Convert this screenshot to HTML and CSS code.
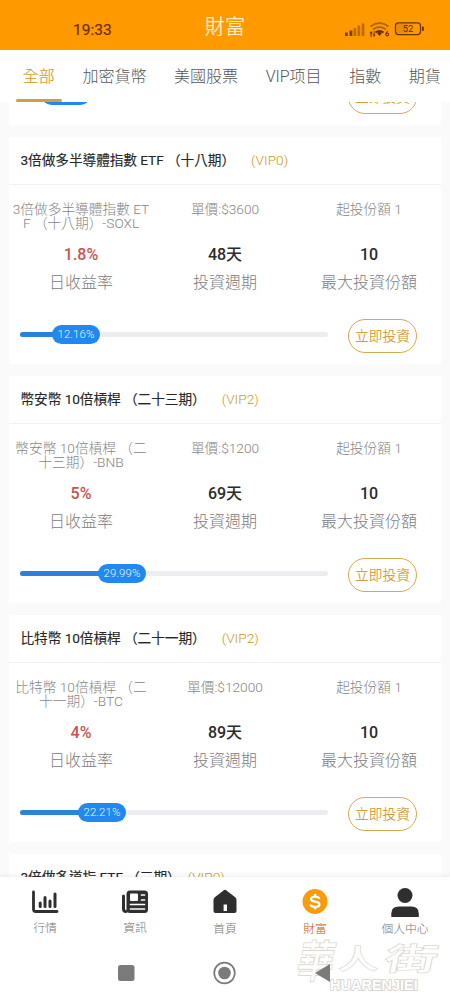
FILE: index.html
```html
<!DOCTYPE html>
<html lang="zh-Hant">
<head>
<meta charset="utf-8">
<meta name="viewport" content="width=device-width, initial-scale=1">
<title>財富</title>
<link rel="stylesheet" href="styles.css">
</head>
<body>
<div class="phone">
  <header class="header">
    <span class="clock">19:33</span>
    <h1 class="title">財富</h1>
    <svg class="status" width="84" height="18" viewBox="0 0 84 18">
      <g fill="#7a3d00">
        <path d="M1 12.500h2.800v3.500H1z"/><path d="M5.500 10.500h2.800V16H5.500z"/>
        <path opacity=".5" d="M9.500 8h2.700v8H9.500zM13.500 5.500h2.700V16h-2.700zM17.700 3.500h2.700V16h-2.700z"/>
      </g>
      <g fill="none" stroke="#8a4b00" stroke-width="1.900">
        <path opacity=".65" d="M26.500 6.500q9-7 18 0M29 9.500q6.500-5 13 0"/>
        <path stroke="#5e2a00" d="M31.500 12.500q4-3 8 0"/>
      </g>
      <path fill="#5e2a00" d="M33 13q2.500-1.800 5 0l-2.500 3zM27 11l1.800 2.500h-1.200V17h-1v-3.500h-1zM30.500 11v3.500h1L30 17l-1.200-2.500h.9V11z"/>
      <circle cx="43.200" cy="14.500" r="1.400" fill="none" stroke="#6b3300" stroke-width="1.100"/><path d="M42 14q0-2.500 2-3" fill="none" stroke="#6b3300"/>
      <rect x="51.500" y="2.800" width="25" height="11.800" rx="3" fill="none" stroke="#6b3300" stroke-width="1.300"/>
      <path d="M53 4h11v9.500H53z" fill="#c86c00" opacity=".35"/>
      <rect x="78" y="6.500" width="1.800" height="4.500" rx=".8" fill="#6b3300"/>
      <text x="64" y="12.200" class="battery-text">52</text>
    </svg>
  </header>

  <nav class="tabs">
    <a class="tab active">全部</a><a class="tab">加密貨幣</a><a class="tab">美國股票</a><a class="tab">VIP项目</a><a class="tab">指數</a><a class="tab">期貨</a>
  </nav>

  <main class="list">
    <article class="card">
      <div class="card-head"></div>
      <div class="cols"></div>
      <div class="foot">
        <div class="track"><div class="bar" style="width:15%"></div><span class="pill" style="left:22px"></span></div>
        <button class="buy">立即投資</button>
      </div>
    </article>

    <article class="card">
      <div class="card-head"><h2>3倍做多半導體指數 ETF （十八期）</h2><span class="vip">(VIP0)</span></div>
      <div class="cols">
        <div class="col"><p class="sub">3倍做多半導體指數 ET<br>F （十八期）-SOXL</p><p class="value rate">1.8%</p><p class="label">日收益率</p></div>
        <div class="col"><p class="sub">單價:$3600</p><p class="value">48天</p><p class="label">投資週期</p></div>
        <div class="col"><p class="sub">起投份額 1</p><p class="value">10</p><p class="label">最大投資份額</p></div>
      </div>
      <div class="foot">
        <div class="track"><div class="bar" style="width:12.16%"></div><span class="pill" style="left:32px">12.16%</span></div>
        <button class="buy">立即投資</button>
      </div>
    </article>

    <article class="card">
      <div class="card-head"><h2>幣安幣 10倍槓桿 （二十三期）</h2><span class="vip">(VIP2)</span></div>
      <div class="cols">
        <div class="col"><p class="sub">幣安幣 10倍槓桿 （二<br>十三期）-BNB</p><p class="value rate">5%</p><p class="label">日收益率</p></div>
        <div class="col"><p class="sub">單價:$1200</p><p class="value">69天</p><p class="label">投資週期</p></div>
        <div class="col"><p class="sub">起投份額 1</p><p class="value">10</p><p class="label">最大投資份額</p></div>
      </div>
      <div class="foot">
        <div class="track"><div class="bar" style="width:29.99%"></div><span class="pill" style="left:78px">29.99%</span></div>
        <button class="buy">立即投資</button>
      </div>
    </article>

    <article class="card">
      <div class="card-head"><h2>比特幣 10倍槓桿 （二十一期）</h2><span class="vip">(VIP2)</span></div>
      <div class="cols">
        <div class="col"><p class="sub">比特幣 10倍槓桿 （二<br>十一期）-BTC</p><p class="value rate">4%</p><p class="label">日收益率</p></div>
        <div class="col"><p class="sub">單價:$12000</p><p class="value">89天</p><p class="label">投資週期</p></div>
        <div class="col"><p class="sub">起投份額 1</p><p class="value">10</p><p class="label">最大投資份額</p></div>
      </div>
      <div class="foot">
        <div class="track"><div class="bar" style="width:22.21%"></div><span class="pill" style="left:58px">22.21%</span></div>
        <button class="buy">立即投資</button>
      </div>
    </article>

    <article class="card">
      <div class="card-head tight"><h2>3倍做多道指 ETF （三期）</h2><span class="vip">(VIP0)</span></div>
    </article>
  </main>

  <footer class="bottom">
    <nav class="nav">
      <a class="item">
        <svg width="28" height="30" viewBox="0 0 28 30" fill="none" stroke="#2f2f2f" stroke-linecap="round">
          <path stroke-width="2.800" stroke-linejoin="round" d="M2.500 5v17.200q0 2.300 2.300 2.300H26"/>
          <path stroke-width="3" d="M9.200 16v3.500M14 10.500v9M19 14v5.500M24 7v12.500"/>
        </svg><span>行情</span>
      </a>
      <a class="item">
        <svg width="28" height="30" viewBox="0 0 28 30">
          <path fill="none" stroke="#2f2f2f" stroke-width="3" stroke-linecap="round" d="M2.500 9v13q0 2.500 2.500 2.500"/>
          <rect x="5.500" y="3.500" width="21.500" height="22.500" rx="3.500" fill="#2f2f2f"/>
          <rect x="9" y="6.500" width="8" height="7.500" rx="1" fill="#fff"/>
          <path stroke="#fff" stroke-width="1.700" stroke-linecap="round" d="M20.500 8h3M20.500 13h3M9.500 17.500h14M9.500 22h14"/>
        </svg><span>資訊</span>
      </a>
      <a class="item low">
        <svg width="28" height="30" viewBox="0 0 28 30"><path fill="#2f2f2f" d="M12.500 3.500Q14 2.200 15.500 3.500L24.500 10.500Q25.500 11.500 25.500 13V24q0 2-2 2H4.500q-2 0-2-2V13q0-1.500 1-2.500z"/><path fill="#fff" d="M12.600 17.500h3.400V24h-3.400z"/></svg><span>首頁</span>
      </a>
      <a class="item low active">
        <svg width="28" height="30" viewBox="0 0 28 30"><circle cx="14" cy="14.500" r="12.500" fill="#f89c0c"/><path fill="none" stroke="#fff" stroke-width="2.300" d="M18.300 11.800q-.5-2.200-4.300-2.200-4 0-4 2.500 0 2 4 2.500 4.400.6 4.400 2.800 0 2.400-4.400 2.400-4 0-4.500-2.400M14.200 7v3M14.200 19.500v2.800"/></svg><span>財富</span>
      </a>
      <a class="item low">
        <svg width="28" height="30" viewBox="0 0 28 30" fill="#2f2f2f"><circle cx="14" cy="8.500" r="7.500"/><path d="M.3 30v-3.500q0-7 7.500-7h12.500q7.500 0 7.500 7V30z"/></svg><span>個人中心</span>
      </a>
    </nav>
    <div class="system">
      <svg width="24" height="24" viewBox="0 0 24 24"><rect x="4" y="4" width="16.500" height="16" rx="2.500" fill="#7b7b7b"/></svg>
      <svg width="24" height="24" viewBox="0 0 24 24"><circle cx="11.500" cy="12" r="10.300" fill="none" stroke="#7b7b7b" stroke-width="1.700"/><circle cx="11.500" cy="12" r="6.300" fill="#7b7b7b"/></svg>
      <svg width="24" height="24" viewBox="0 0 24 24"><path fill="#7b7b7b" d="M18 3v18L3 12z"/></svg>
    </div>
  </footer>
  <div class="watermark"><span class="mark-zh"><b class="hua">華</b><b class="ren">人</b><b class="jie">街</b></span><span class="mark-en">HUARENJIEI</span></div>
</div>
</body>
</html>
```
FILE: styles.css
```css
* { box-sizing: border-box; }
body, h1, h2, p { margin: 0; }
body { font-family: Roboto, "Noto Sans CJK TC", sans-serif; font-weight: 300; background: #fafafa; }
.phone { position: relative; width: 450px; height: 1000px; display: flex; flex-direction: column; overflow: hidden; }

.header { height: 50px; flex: none; background: #ff9900; display: grid; grid-template-columns: 1fr auto 1fr; align-items: center; padding-top: 4px; }
.clock { padding: 6px 0 0 73px; font-size: 15.5px; font-weight: 400; line-height: 20px; color: #6b2c00; -webkit-text-stroke: .2px; }
.title { font-size: 20px; line-height: 24px; font-weight: 300; color: #fff5d8; -webkit-text-stroke: .25px; }
.status { justify-self: end; margin: 3px 22px 0 0; }
.battery-text { font: 400 9.5px Roboto, sans-serif; fill: #5e2a00; text-anchor: middle; }

.tabs { position: relative; z-index: 1; height: 52px; flex: none; background: #fff; display: flex; padding-left: 9px; overflow: hidden; }
.tab { position: relative; flex: none; padding: 15px 13.8px 0; font-size: 16px; line-height: 24px; color: #555; white-space: nowrap; }
.tab.active { color: #d99a2e; -webkit-text-stroke: .2px; }
.tab.active::after { content: ""; position: absolute; left: 7px; right: 7px; bottom: 0; height: 3px; border-radius: 2px; background: #cfa040; }

.list { flex: 1; min-height: 0; overflow: hidden; padding: 0 9px; }
.card { height: 227px; margin-bottom: 12px; background: #fff; }
.card:first-child { margin-top: -204px; }
.card-head { height: 48px; border-bottom: 1px solid #f1f1f1; display: flex; align-items: center; gap: 20px; padding: 0 12px 2px 11.5px; white-space: nowrap; }
.card-head.tight { gap: 11px; padding-bottom: 1px; }
.card-head h2 { font-size: 13.7px; line-height: 20px; font-weight: 400; color: #262626; -webkit-text-stroke: .12px; letter-spacing: -.08px; margin-right: -4px; }
.vip { font-size: 13.7px; font-weight: 300; color: #c99a20; }
.cols { height: 122px; display: grid; grid-template-columns: repeat(3, 1fr); padding-top: 17px; text-align: center; }
.sub { height: 42px; font-size: 13.7px; line-height: 14px; color: #858585; white-space: nowrap; }
.value { font-size: 16px; line-height: 22px; font-weight: 500; color: #2b2b2b; }
.value.rate { color: #c6534f; }
.label { margin-top: 5px; font-size: 16px; line-height: 24px; color: #808080; }
.foot { display: flex; align-items: center; gap: 20px; padding: 12px 0 0 11px; }
.track { position: relative; width: 308px; height: 5px; margin-top: -3px; border-radius: 3px; background: #ebedf0; }
.bar { height: 5px; border-radius: 3px; background: #2b82db; }
.pill { position: absolute; top: -7px; width: 48px; height: 19px; border-radius: 10px; background: #2088ee; color: #e4fbff; font-size: 11.5px; line-height: 19px; text-align: center; }
.buy { width: 69px; height: 34px; padding: 0; border: 1px solid #d4aa50; border-radius: 17px; background: #fff; color: #cf9218; font: 300 13.7px/32px Roboto, "Noto Sans CJK TC", sans-serif; -webkit-text-stroke: .15px; }

.bottom { position: relative; height: 123px; flex: none; background: #fff; box-shadow: 0 -1px 5px rgba(0, 0, 0, .08); }
.nav { display: grid; grid-template-columns: repeat(5, 1fr); height: 84px; }
.item { display: flex; flex-direction: column; align-items: center; padding-top: 10px; font-size: 11.8px; line-height: 16px; color: #757575; }
.item span { margin-top: 3px; }
.item.low span { margin-top: 4px; }
.item.active { color: #c9590e; }
.system { position: relative; z-index: 2; display: flex; justify-content: center; gap: 75px; }

.watermark { position: absolute; z-index: 1; left: 300px; top: 931px; width: 150px; height: 64px; }
.mark-zh { display: flex; font-family: "Noto Sans CJK TC", sans-serif; font-size: 36px; line-height: 45px; }
.mark-zh b { color: #fff; -webkit-text-stroke: 1.6px #dcd8d0; paint-order: stroke fill; font-weight: 500; }
.hua { transform: skewX(-12deg) scaleY(1.2) translateY(4px); }
.ren { margin-left: 4px; transform: scale(1.1, .75) translateY(5px); }
.jie { margin-left: 19px; transform: skewX(-12deg) scale(1.45, .85) translateY(4px); }
.mark-en { position: absolute; left: 30px; top: 45px; font: 700 14.5px/18px "Liberation Sans", sans-serif; color: #fff; -webkit-text-stroke: 1.6px #d3cfc8; paint-order: stroke fill; }
```
